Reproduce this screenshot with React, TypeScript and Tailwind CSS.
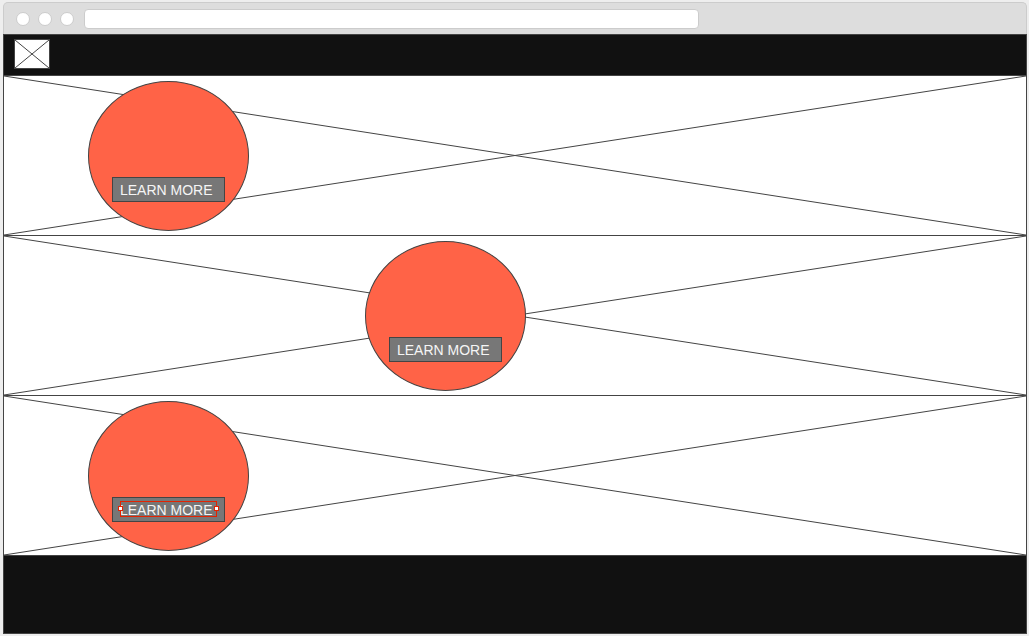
import React from "react";

type Band = { id: string; offset: string; selected?: boolean };

const bands: Band[] = [
  { id: "first", offset: "ml-[84px]" },
  { id: "second", offset: "ml-[361px]" },
  { id: "third", offset: "ml-[84px]", selected: true },
];

function Cross() {
  return (
    <svg
      aria-hidden="true"
      className="absolute inset-0 h-full w-full"
      viewBox="0 0 100 100"
      preserveAspectRatio="none"
      fill="none"
      stroke="#444"
      strokeWidth="1"
    >
      <path d="M0 0L100 100M0 100L100 0" vectorEffect="non-scaling-stroke" />
    </svg>
  );
}

function SelectionFrame() {
  return (
    <span aria-hidden="true" className="pointer-events-none absolute inset-x-[7px] top-[3px] h-4 border border-[#e42200]">
      <span className="absolute top-1 -left-[3px] size-[5px] border border-[#e42200] bg-white" />
      <span className="absolute top-1 -right-[3px] size-[5px] border border-[#e42200] bg-white" />
    </span>
  );
}

function PromoBand({ offset, selected }: Band) {
  return (
    <section className="relative h-40 border-t border-[#444] bg-white pt-[5px]">
      <Cross />
      <div
        className={`relative flex h-[150px] w-[161px] items-end justify-center rounded-[50%] border border-[#444] bg-[#ff6347] pb-7 ${offset}`}
      >
        <button
          type="button"
          className="relative h-[25px] w-[113px] border border-[#444] bg-[#777] px-[7px] text-left text-sm leading-6 whitespace-nowrap text-[#f5f5f5]"
        >
          LEARN MORE
          {selected && <SelectionFrame />}
        </button>
      </div>
    </section>
  );
}

export default function App() {
  return (
    <div className="flex min-h-screen flex-col bg-[#eee] pt-[2px] pr-[2px] pb-[2px] pl-[3px] font-['Liberation_Sans',Arial,sans-serif]">
      <div className="flex h-8 shrink-0 items-center gap-2 rounded-t-[5px] border border-b-0 border-[#ccc] bg-[#ddd] px-3">
        <span className="size-[14px] shrink-0 rounded-full border border-[#ccc] bg-white" />
        <span className="size-[14px] shrink-0 rounded-full border border-[#ccc] bg-white" />
        <span className="size-[14px] shrink-0 rounded-full border border-[#ccc] bg-white" />
        <input
          type="text"
          aria-label="Address"
          className="ml-[2px] h-5 max-w-[615px] min-w-0 flex-1 rounded border border-[#ccc] bg-white px-2 text-xs outline-none"
        />
      </div>
      <div className="flex flex-1 flex-col border-x border-b border-[#444]">
        <header className="h-[41px] border-t border-[#444] bg-[#111] px-[10px] pt-1">
          <a href="#" aria-label="Home" className="relative block h-[30px] w-9 border border-[#444] bg-white">
            <Cross />
          </a>
        </header>
        <main>
          {bands.map((band) => (
            <PromoBand key={band.id} {...band} />
          ))}
        </main>
        <footer className="flex-1 border-t border-[#444] bg-[#111]" />
      </div>
    </div>
  );
}
